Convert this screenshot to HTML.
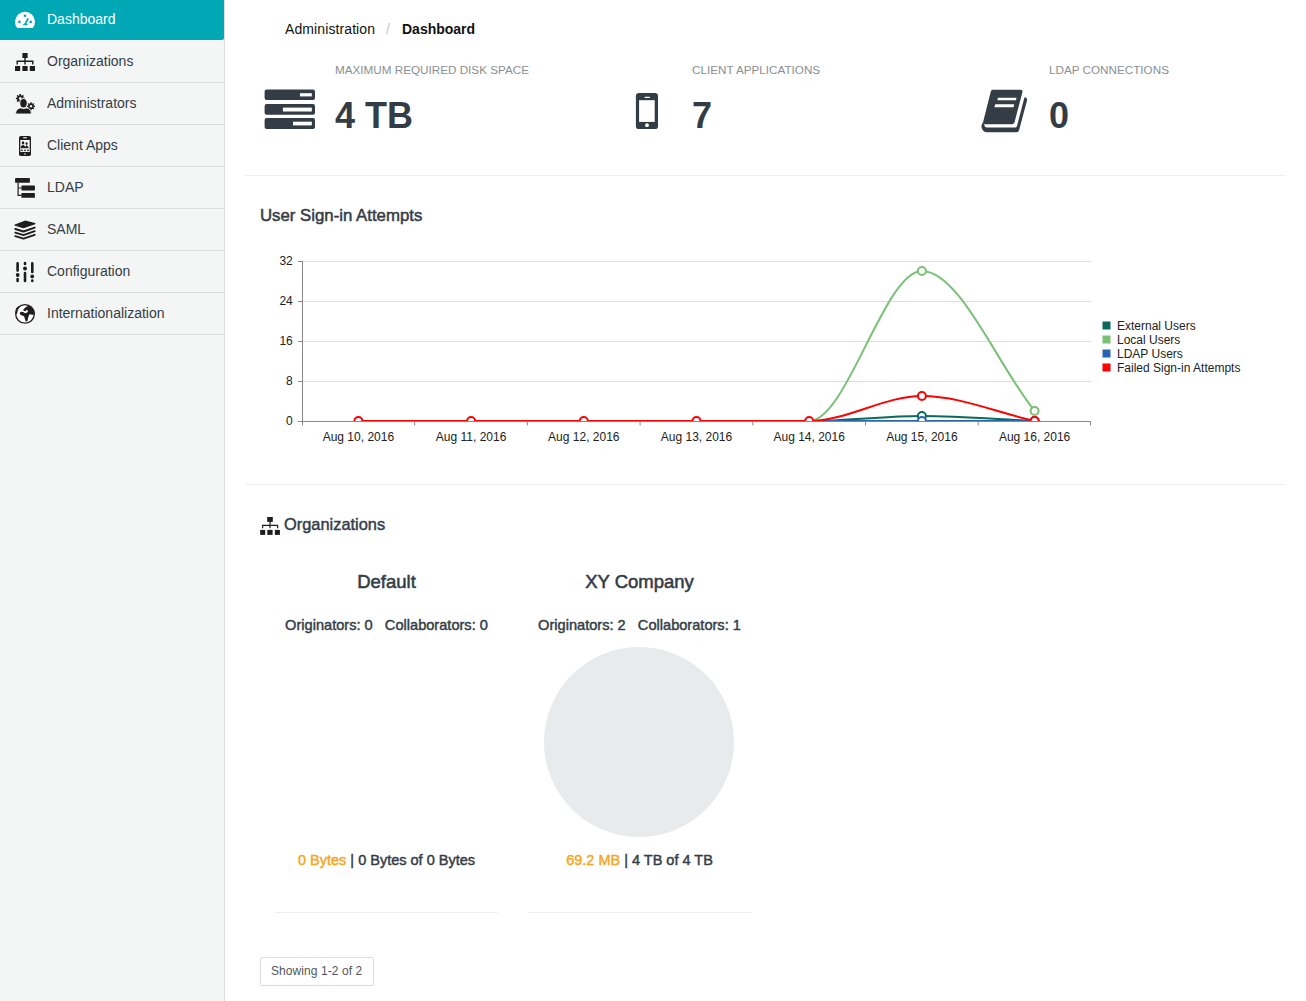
<!DOCTYPE html>
<html><head><meta charset="utf-8">
<style>
html,body{margin:0;padding:0;width:1306px;height:1001px;overflow:hidden;background:#fff;}
body{font-family:"Liberation Sans",sans-serif;color:#343d46;position:relative;}
.a{position:absolute;white-space:nowrap;line-height:1;}
#side{position:absolute;left:0;top:0;width:224px;height:1001px;background:#f4f5f5;border-right:1px solid #dcdddd;}
.sl{position:absolute;left:0;width:224px;height:1px;background:#dcdddd;}
.st{position:absolute;left:47px;font-size:14px;line-height:1;color:#343d46;white-space:nowrap;}
.lab{font-size:11.7px;color:#8a8f93;}
.val{font-size:36px;font-weight:bold;color:#343d46;}
.hr{position:absolute;left:245px;width:1041px;height:1px;background:#eeeeee;}
.md{-webkit-text-stroke:0.35px #343d46;}
.card{position:absolute;width:223px;text-align:center;white-space:nowrap;line-height:1;}
svg{position:absolute;left:0;top:0;}
</style></head><body>
<div id="side">
  <div style="position:absolute;left:0;top:0;width:224px;height:40px;background:#00a8b5;border-bottom-right-radius:2px;"></div>
  <div class="sl" style="top:82px"></div>
  <div class="sl" style="top:124px"></div>
  <div class="sl" style="top:166px"></div>
  <div class="sl" style="top:208px"></div>
  <div class="sl" style="top:250px"></div>
  <div class="sl" style="top:292px"></div>
  <div class="sl" style="top:334px"></div>
  <div class="st" style="top:12px;color:#fff">Dashboard</div>
  <div class="st" style="top:54px">Organizations</div>
  <div class="st" style="top:96px">Administrators</div>
  <div class="st" style="top:138px">Client Apps</div>
  <div class="st" style="top:180px">LDAP</div>
  <div class="st" style="top:222px">SAML</div>
  <div class="st" style="top:264px">Configuration</div>
  <div class="st" style="top:306px">Internationalization</div>
</div>

<!-- sidebar icons -->
<svg width="224" height="340" viewBox="0 0 224 340">
  <!-- dashboard -->
  <path d="M17.2,28 A10,10 0 1 1 32.8,28 Z" fill="#fff"/>
  <g fill="#00a8b5">
    <circle cx="25" cy="15.8" r="1.3"/>
    <circle cx="19.4" cy="21.9" r="1.3"/>
    <circle cx="30.7" cy="21.9" r="1.3"/>
    <path d="M27.4,17.9 L29,18.7 L26.5,23.2 L28,25.3 L22.3,25.3 L24.9,22.9 Z"/>
  </g>
  <g fill="#1f1d1e">
    <!-- organizations sitemap -->
    <rect x="22.4" y="53" width="5.2" height="5" />
    <rect x="15" y="66" width="5.2" height="5" />
    <rect x="22.4" y="66" width="5.2" height="5" />
    <rect x="29.8" y="66" width="5.2" height="5" />
    <path d="M17.2,64.5 V61.2 H32.8 V64.5 M25,58 V64.5" fill="none" stroke="#1f1d1e" stroke-width="1.4"/>
    <!-- administrators -->
    <path d="M23.62,97.77 L24.72,97.66 L24.72,99.34 L23.62,99.23 L23.16,100.33 L24.02,101.03 L22.83,102.22 L22.13,101.36 L21.03,101.82 L21.14,102.92 L19.46,102.92 L19.57,101.82 L18.47,101.36 L17.77,102.22 L16.58,101.03 L17.44,100.33 L16.98,99.23 L15.88,99.34 L15.88,97.66 L16.98,97.77 L17.44,96.67 L16.58,95.97 L17.77,94.78 L18.47,95.64 L19.57,95.18 L19.46,94.08 L21.14,94.08 L21.03,95.18 L22.13,95.64 L22.83,94.78 L24.02,95.97 L23.16,96.67Z"/>
    <circle cx="20.3" cy="98.5" r="1.4" fill="#f0f0f0"/>
    <path d="M33.93,105.56 L34.93,105.45 L34.93,106.95 L33.93,106.84 L33.53,107.82 L34.31,108.45 L33.25,109.51 L32.62,108.73 L31.64,109.13 L31.75,110.13 L30.25,110.13 L30.36,109.13 L29.38,108.73 L28.75,109.51 L27.69,108.45 L28.47,107.82 L28.07,106.84 L27.07,106.95 L27.07,105.45 L28.07,105.56 L28.47,104.58 L27.69,103.95 L28.75,102.89 L29.38,103.67 L30.36,103.27 L30.25,102.27 L31.75,102.27 L31.64,103.27 L32.62,103.67 L33.25,102.89 L34.31,103.95 L33.53,104.58Z"/>
    <circle cx="31" cy="106.2" r="1.2" fill="#f0f0f0"/>
    <path d="M15.6,114 C15.6,110.5 17.6,108.3 20.5,107.9 L23.6,108.6 L26.7,107.9 C29.6,108.3 31.4,110.5 31.4,114 Z" stroke="#f4f5f5" stroke-width="0.8"/>
    <rect x="15" y="113.9" width="18" height="2" fill="#f4f5f5"/>
    <ellipse cx="23.5" cy="103.3" rx="3.8" ry="4.75" stroke="#f4f5f5" stroke-width="1.1"/>
    <!-- client apps -->
    <rect x="19" y="136" width="12" height="20" rx="1.8"/>
    <rect x="20.3" y="140" width="9.4" height="12" fill="#f8f8f8"/>
    <rect x="23.2" y="137.2" width="3.6" height="1.1" fill="#f8f8f8"/>
    <circle cx="25" cy="154" r="0.8" fill="#f8f8f8"/>
    <ellipse cx="23" cy="142.8" rx="1.3" ry="1.6"/>
    <path d="M20.6,148.3 C20.8,146 21.8,145 23,145 C24.2,145 25.2,146 25.4,148.3 Z"/>
    <ellipse cx="26.6" cy="143.6" rx="1.1" ry="1.4"/>
    <path d="M25,147.5 C25.4,146 26,145.5 26.6,145.5 C27.5,145.5 28.3,146.5 28.6,148.3 L25.6,148.3Z"/>
    <circle cx="22" cy="150.3" r="0.9"/><circle cx="25" cy="150.3" r="0.9"/><circle cx="28" cy="150.3" r="0.9"/>
    <!-- ldap -->
    <rect x="15.1" y="178.1" width="14.8" height="4.6" rx="0.4"/>
    <rect x="21.4" y="185.6" width="13.5" height="4.8" rx="0.4"/>
    <rect x="21.4" y="193.1" width="13.5" height="4.7" rx="0.4"/>
    <path d="M18.1,182.5 V195.4 H21.5 M18.1,188 H21.5" fill="none" stroke="#1f1d1e" stroke-width="1.2"/>
    <!-- saml -->
    <path d="M15.1,225.1 L25,221.2 L34.9,223.6 L23.5,227.6 Z" stroke="#1f1d1e" stroke-width="1.2" stroke-linejoin="round"/>
    <path d="M15.3,229 L23.5,231.5 L34.7,227.6 M15.3,232.6 L23.5,235.1 L34.7,231.2 M15.3,236.2 L23.5,238.7 L34.7,234.8" fill="none" stroke="#1f1d1e" stroke-width="1.9" stroke-linejoin="round" stroke-linecap="round"/>
    <!-- configuration -->
    <path d="M17.6,263.2 V270.6 M25,263 V264 M25,273 V281 M32.3,263.2 V272 M17.6,279 V281 M32.3,280.6 V281" fill="none" stroke="#1f1d1e" stroke-width="2.6" stroke-linecap="round"/>
    <circle cx="17.7" cy="275" r="1.9"/>
    <circle cx="25" cy="268.4" r="2"/>
    <circle cx="32.2" cy="276.4" r="1.9"/>
    <!-- globe -->
    <circle cx="25" cy="313.9" r="9.3" fill="#fff" stroke="#1f1d1e" stroke-width="1.3"/>
    <path d="M25.58,307.29 L26.78,306.39 L29.18,305.85 L30.98,306.69 L33.07,308.79 L34.42,311.49 L34.63,314.18 L32.77,314.78 L29.48,314.33 L28.73,315.98 L27.98,318.38 L27.23,321.67 L25.58,321.07 L24.83,318.68 L24.08,316.28 L21.99,315.38 L20.19,314.48 L19.74,312.68 L21.09,311.64 L23.19,312.08 L24.98,313.13 L27.23,312.53 L28.13,310.89 L26.93,309.84 L25.13,311.34 L23.34,310.59 L23.49,309.24 L24.98,308.04Z"/>
    <path d="M15.9,308.5 L17.79,306.8 L20.2,306.4 L18.9,308.3 L17.8,309.9 L17.4,312.2 L16.9,314.6 L15.5,313Z"/>
  </g>
</svg>

<div class="a" style="left:285px;top:22px;font-size:14px;color:#111;letter-spacing:0.1px">Administration</div>
<div class="a" style="left:386px;top:22px;font-size:14px;color:#c8c8c8">/</div>
<div class="a" style="left:402px;top:22px;font-size:14px;font-weight:bold;color:#111">Dashboard</div>

<div class="a lab" style="left:335px;top:63.5px">MAXIMUM REQUIRED DISK SPACE</div>
<div class="a lab" style="left:692px;top:63.5px">CLIENT APPLICATIONS</div>
<div class="a lab" style="left:1049px;top:63.5px">LDAP CONNECTIONS</div>
<div class="a val" style="left:335px;top:98px">4 TB</div>
<div class="a val" style="left:692px;top:98px">7</div>
<div class="a val" style="left:1049px;top:98px">0</div>

<div class="hr" style="top:175px"></div>
<div class="a md" style="left:260px;top:208px;font-size:16.8px;-webkit-text-stroke-width:0.5px">User Sign-in Attempts</div>
<div class="hr" style="top:484px"></div>

<div class="a md" style="left:284px;top:516px;font-size:16.4px;-webkit-text-stroke-width:0.45px">Organizations</div>

<div class="card md" style="left:275px;top:573px;font-size:18.5px;-webkit-text-stroke-width:0.55px">Default</div>
<div class="card md" style="left:528px;top:573px;font-size:18.5px;-webkit-text-stroke-width:0.55px">XY Company</div>
<div class="card md" style="left:275px;top:618px;font-size:14.6px;-webkit-text-stroke-width:0.45px">Originators: 0&nbsp;&nbsp;&nbsp;Collaborators: 0</div>
<div class="card md" style="left:528px;top:618px;font-size:14.6px;-webkit-text-stroke-width:0.45px">Originators: 2&nbsp;&nbsp;&nbsp;Collaborators: 1</div>
<div class="card md" style="left:275px;top:853px;font-size:14.5px;-webkit-text-stroke-width:0.45px"><span style="color:#f5a623;-webkit-text-stroke-color:#f5a623">0 Bytes</span> | 0 Bytes of 0 Bytes</div>
<div class="card md" style="left:528px;top:853px;font-size:14.5px;-webkit-text-stroke-width:0.45px"><span style="color:#f5a623;-webkit-text-stroke-color:#f5a623">69.2 MB</span> | 4 TB of 4 TB</div>
<div style="position:absolute;left:275px;top:912px;width:223px;height:1px;background:#eee"></div>
<div style="position:absolute;left:528px;top:912px;width:223px;height:1px;background:#eee"></div>

<div style="position:absolute;left:260px;top:957px;width:112px;height:27px;border:1px solid #dddddd;border-radius:2px"></div>
<div class="a" style="left:271px;top:965px;font-size:12px;color:#555;letter-spacing:0.07px">Showing 1-2 of 2</div>

<!-- main svg: icons + chart -->
<svg width="1306" height="1001" viewBox="0 0 1306 1001" style="left:0;top:0" font-family="Liberation Sans" font-size="12">
  <defs><clipPath id="ca"><rect x="302" y="200" width="789" height="221"/></clipPath></defs>
  <!-- server icon -->
  <g fill="#343d46">
    <rect x="264.6" y="89.6" width="50.4" height="10.5" rx="2"/>
    <rect x="264.6" y="104" width="50.4" height="10.7" rx="2"/>
    <rect x="264.6" y="117.9" width="50.4" height="11.1" rx="2"/>
  </g>
  <g fill="#fff">
    <rect x="300" y="93.2" width="11.8" height="3.2"/>
    <rect x="282.9" y="107.6" width="28.9" height="3.9"/>
    <rect x="293" y="121.7" width="18.8" height="3.7"/>
  </g>
  <!-- phone -->
  <rect x="635.9" y="93" width="22.1" height="36.1" rx="3.2" fill="#343d46"/>
  <rect x="639.1" y="100.2" width="15.6" height="21.7" fill="#fff"/>
  <rect x="644.6" y="96.7" width="5.4" height="1.2" rx="0.5" fill="#fff"/>
  <circle cx="647" cy="125.2" r="1.9" fill="#fff"/>
  <!-- book -->
  <g fill="#343d46">
    <path d="M992.5,89.7 L1020.5,89.7 Q1023,89.7 1022.4,92.2 L1014.5,122.3 Q1014,124.3 1012,124.3 L985,124.3 Q982.5,124.3 983.2,121.8 L990.8,91.6 Q991.3,89.7 992.5,89.7 Z"/>
    <path d="M983,122 Q979.5,128 984,131.5 Q985,132.3 987,132.3 L1016.5,132.3 Q1018.5,132.3 1019,130.5 L1027,100.5 Q1027.5,98.5 1026,97.8 L1024.5,97.2 L1017,126 Q1016.5,127.6 1015,127.6 L987,127.6 Q984.5,127.6 984.5,125.5 Z"/>
  </g>
  <g fill="#fff">
    <path d="M998,97.8 L1016.5,97.8 L1016,100.2 L997.4,100.2 Z"/>
    <path d="M995.2,104.2 L1014.2,104.2 L1013.5,107.3 L994.4,107.3 Z"/>
  </g>
  <!-- org header icon -->
  <g fill="#1f1d1e">
    <rect x="267.2" y="517" width="5.6" height="4.9"/>
    <rect x="260.2" y="529.9" width="5" height="5"/>
    <rect x="267.3" y="529.9" width="5.3" height="5"/>
    <rect x="274.9" y="529.9" width="5" height="5"/>
    <path d="M262.6,528.2 V525.4 H277.6 V528.2 M270,521.8 V528.2" fill="none" stroke="#1f1d1e" stroke-width="1.2"/>
  </g>

  <!-- chart -->
  <g stroke="#dddddd" stroke-width="1">
    <path d="M302,261.5H1091M302,301.5H1091M302,341.5H1091M302,381.5H1091"/>
  </g>
  <g clip-path="url(#ca)" fill="none" stroke-width="2">
    <path stroke="#0b6a5c" d="M358.4,421 L809.2,421 C846.8,421 884.4,416 921.9,416 C959.5,416 997.1,419.3 1034.6,421"/>
    <path stroke="#7ac077" d="M358.4,421 L809.2,421 C846.8,421 884.4,271 921.9,271 C959.5,271 997.1,364.3 1034.6,411"/>
    <path stroke="#2a64b0" d="M358.4,421 L1034.6,421"/>
    <path stroke="#ff0000" d="M358.4,421 L809.2,421 C846.8,421 884.4,396 921.9,396 C959.5,396 997.1,412.7 1034.6,421"/>
    <g fill="#fff">
      <g stroke="#0b6a5c"><circle cx="921.9" cy="416" r="4"/><circle cx="1034.6" cy="421" r="4"/></g>
      <g stroke="#7ac077"><circle cx="921.9" cy="271" r="4"/><circle cx="1034.6" cy="411" r="4"/></g>
      <g stroke="#2a64b0"><circle cx="921.9" cy="421" r="4"/><circle cx="1034.6" cy="421" r="4"/></g>
      <g stroke="#ff0000">
        <circle cx="358.4" cy="421" r="4"/><circle cx="471.1" cy="421" r="4"/><circle cx="583.8" cy="421" r="4"/>
        <circle cx="696.5" cy="421" r="4"/><circle cx="809.2" cy="421" r="4"/><circle cx="921.9" cy="396" r="4"/>
        <circle cx="1034.6" cy="421" r="4"/>
      </g>
    </g>
  </g>
  <g stroke="#888888" stroke-width="1" fill="none">
    <path d="M302.5,261 V425.5 M298,421.5 H1091 M298,261.5H302 M298,301.5H302 M298,341.5H302 M298,381.5H302"/>
    <path d="M414.7,421V425.5 M527.4,421V425.5 M640.1,421V425.5 M752.8,421V425.5 M865.5,421V425.5 M978.2,421V425.5 M1090.5,421V425.5"/>
  </g>
  <g fill="#222222" text-anchor="end">
    <text x="292.8" y="264.8">32</text>
    <text x="292.8" y="304.8">24</text>
    <text x="292.8" y="344.8">16</text>
    <text x="292.8" y="384.8">8</text>
    <text x="292.8" y="424.8">0</text>
  </g>
  <g fill="#222222" text-anchor="middle">
    <text x="358.4" y="441">Aug 10, 2016</text>
    <text x="471.1" y="441">Aug 11, 2016</text>
    <text x="583.8" y="441">Aug 12, 2016</text>
    <text x="696.5" y="441">Aug 13, 2016</text>
    <text x="809.2" y="441">Aug 14, 2016</text>
    <text x="921.9" y="441">Aug 15, 2016</text>
    <text x="1034.6" y="441">Aug 16, 2016</text>
  </g>
  <g>
    <rect x="1102.5" y="321.5" width="8" height="8" fill="#0b6a5c"/>
    <rect x="1102.5" y="335.5" width="8" height="8" fill="#7ac077"/>
    <rect x="1102.5" y="349.5" width="8" height="8" fill="#2a64b0"/>
    <rect x="1102.5" y="363.5" width="8" height="8" fill="#ff0000"/>
    <g fill="#222222">
      <text x="1117" y="330">External Users</text>
      <text x="1117" y="344">Local Users</text>
      <text x="1117" y="358">LDAP Users</text>
      <text x="1117" y="372">Failed Sign-in Attempts</text>
    </g>
  </g>
  <!-- pie -->
  <circle cx="639" cy="742" r="95" fill="#e9eaeb"/>
</svg>
</body></html>
